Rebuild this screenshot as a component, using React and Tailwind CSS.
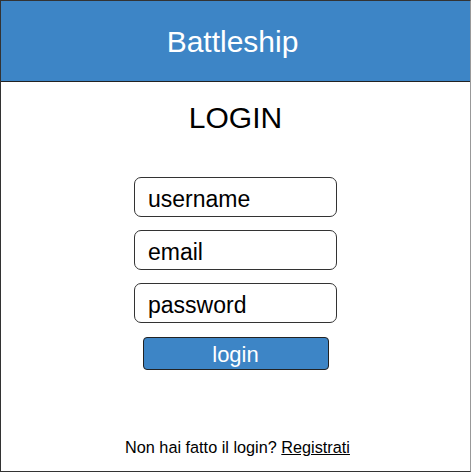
import React from 'react';

export default function App() {
  return (
    <div
      className="w-[471px] h-[472px] flex flex-col bg-white border border-[#333] border-r-[#999]"
      style={{ fontFamily: '"Liberation Sans", Arial, sans-serif' }}
    >
      <header className="h-[81px] shrink-0 bg-[#3d85c6] border-b border-[#222] flex items-center justify-center pr-[6px]">
        <h1 className="text-white text-[30px] leading-none pt-[2px]">Battleship</h1>
      </header>

      <main className="flex-1 flex flex-col items-center">
        <h2 className="text-black text-[30px] leading-none pt-[21px]">LOGIN</h2>

        <form className="mt-[44px] flex flex-col items-center gap-[13px]" onSubmit={(e) => e.preventDefault()}>
          <input
            type="text"
            placeholder="username"
            className="w-[203px] h-[40px] px-[13px] pt-[4px] border border-[#333] rounded-[7px] text-[23px] text-black placeholder:text-black outline-none"
          />
          <input
            type="email"
            placeholder="email"
            className="w-[203px] h-[40px] px-[13px] pt-[4px] border border-[#333] rounded-[7px] text-[23px] text-black placeholder:text-black outline-none"
          />
          <input
            type="password"
            placeholder="password"
            className="w-[203px] h-[40px] px-[13px] pt-[4px] border border-[#333] rounded-[7px] text-[23px] text-black placeholder:text-black outline-none"
          />
          <button
            type="submit"
            className="mt-[1px] w-[186px] h-[33px] pt-[3px] bg-[#3d85c6] border border-[#222] rounded-[4px] text-white text-[22px] leading-none"
          >
            login
          </button>
        </form>

        <p className="mt-auto pb-[16px] pl-[4px] text-[16.25px] leading-none text-black">
          Non hai fatto il login? <a href="#" className="underline text-black">Registrati</a>
        </p>
      </main>
    </div>
  );
}
